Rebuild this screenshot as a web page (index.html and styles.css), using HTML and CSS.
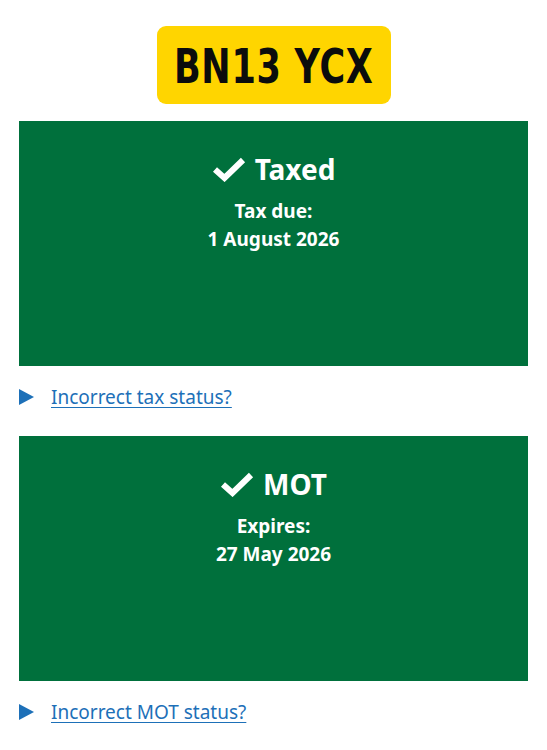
FILE: index.html
```html
<!DOCTYPE html>
<html lang="en">
<head>
<meta charset="utf-8">
<title>Vehicle status</title>
<link rel="stylesheet" href="styles.css">
</head>
<body>
<main class="page">
  <div class="plate-wrap">
    <div class="plate"><span class="plate-text">BN13 YCX</span></div>
  </div>

  <section class="panel">
    <h2 class="panel-title">
      <svg class="tick" viewBox="0 0 34 25" aria-hidden="true"><path d="M3 12.5 L12.5 21 L31 3" fill="none" stroke="#fff" stroke-width="6" stroke-linejoin="miter"/></svg>
      <span>Taxed</span>
    </h2>
    <p class="panel-body">Tax due:<br>1 August 2026</p>
  </section>

  <div class="details">
    <span class="arrow"></span>
    <a class="link" href="#">Incorrect tax status?</a>
  </div>

  <section class="panel">
    <h2 class="panel-title">
      <svg class="tick" viewBox="0 0 34 25" aria-hidden="true"><path d="M3 12.5 L12.5 21 L31 3" fill="none" stroke="#fff" stroke-width="6" stroke-linejoin="miter"/></svg>
      <span>MOT</span>
    </h2>
    <p class="panel-body">Expires:<br>27 May 2026</p>
  </section>

  <div class="details">
    <span class="arrow"></span>
    <a class="link" href="#">Incorrect MOT status?</a>
  </div>
</main>
</body>
</html>
```
FILE: styles.css
```css
html, body {
  margin: 0;
  padding: 0;
  background: #fff;
}
body {
  font-family: "Noto Sans", Arial, sans-serif;
  color: #0b0c0c;
}
.page {
  padding: 26px 19px 0;
}
.plate-wrap {
  display: flex;
  justify-content: center;
  margin-bottom: 17px;
}
.plate {
  width: 234px;
  height: 78px;
  background: #ffd500;
  border-radius: 9px;
  display: flex;
  align-items: center;
  justify-content: center;
  font-family: "DejaVu Sans", sans-serif;
  font-weight: bold;
  font-size: 48px;
  line-height: 1;
  color: #0b0c0c;
  white-space: nowrap;
}
.plate-text {
  display: inline-block;
  transform: scaleX(0.73);
  letter-spacing: 1px;
  padding-top: 2px;
}
.panel {
  background: #00703c;
  color: #fff;
  height: 245px;
  box-sizing: border-box;
  padding-top: 30px;
  text-align: center;
}
.panel-title {
  margin: 0;
  display: flex;
  justify-content: center;
  align-items: center;
  gap: 9px;
  font-size: 28px;
  line-height: 36px;
  font-weight: 700;
}
.tick {
  width: 34px;
  height: 25px;
}
.panel-body {
  margin: 10px 0 0;
  font-size: 19px;
  line-height: 28px;
  font-weight: 700;
}
.details {
  display: flex;
  align-items: center;
  gap: 17px;
  height: 62px;
  margin-bottom: 8px;
}
.arrow {
  width: 0;
  height: 0;
  border-style: solid;
  border-width: 8.5px 0 8.5px 15px;
  border-color: transparent transparent transparent #1d70b8;
}
.link {
  color: #1d70b8;
  font-size: 19px;
  text-decoration: underline;
  text-underline-offset: 3px;
  text-decoration-thickness: 1px;
}
```
